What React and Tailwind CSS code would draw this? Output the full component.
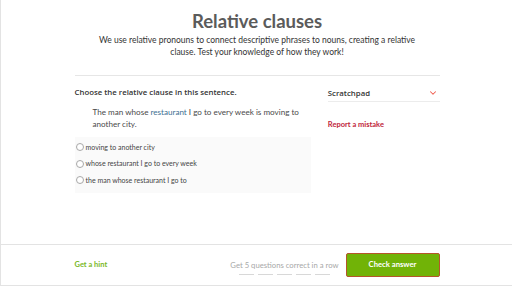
import { ChevronDown } from 'lucide-react'

const choices = [
  'moving to another city',
  'whose restaurant I go to every week',
  'the man whose restaurant I go to',
]

export default function App() {
  return (
    <div className="h-[288px] w-[512px] overflow-hidden bg-white font-['Lato',sans-serif] text-[#333]">
      <div className="flex h-[286px] flex-col border-b border-l border-[#e3e3e3]">
        <main className="flex-1">
          <div className="mx-auto w-[366px] pl-[1px]">
            <h1 className="mt-[9px] text-center text-[18.5px] font-bold leading-[24px] text-[#5b5b5b]">
              Relative clauses
            </h1>
            <p className="mt-[1px] text-center text-[8.5px] leading-[12px] text-[#333]">
              We use relative pronouns to connect descriptive phrases to nouns, creating a relative
              <br />
              clause. Test your knowledge of how they work!
            </p>
            <div className="mt-[17px] border-t border-[#e6e6e6]" />
            <div className="flex">
              <div className="w-[237px]">
                <p className="mt-[11px] font-['Open_Sans',sans-serif] text-[7.8px] font-semibold leading-[10px] text-[#333]">
                  Choose the relative clause in this sentence.
                </p>
                <p className="mt-[9px] pl-[18px] pr-[8px] text-[8.1px] leading-[12px] text-[#4a4a4a]">
                  The man whose <span className="text-[#3d6f92]">restaurant</span> I go to every week is moving to another city.
                </p>
                <div className="mt-[7px] bg-[#fafafa] pb-[4px] pt-[2px]">
                  {choices.map((c) => (
                    <div key={c} className="flex h-[16.5px] items-center gap-[2px] pl-[1px] text-[7px] leading-[9px] text-[#444]">
                      <span className="h-[8px] w-[8px] shrink-0 rounded-full border border-[#a8a8a8] bg-white" />
                      <span>{c}</span>
                    </div>
                  ))}
                </div>
              </div>
              <div className="ml-[17px] w-[112px]">
                <div className="mt-[12px] flex items-center justify-between border-b border-[#ececec] pb-[3px]">
                  <span className="font-['Open_Sans',sans-serif] text-[7.8px] font-semibold leading-[10px] text-[#333]">Scratchpad</span>
                  <ChevronDown className="mr-[2px] h-[10px] w-[10px] text-[#ef5a4c]" strokeWidth={2.5} color="#ef5a4c" />
                </div>
                <p className="mt-[17px] text-[7.5px] font-bold text-[#c0253b]">Report a mistake</p>
              </div>
            </div>
          </div>
        </main>
        <footer className="flex h-[41px] items-center border-t border-[#e3e3e3]">
          <div className="mx-auto flex w-[366px] items-center pl-[1px]">
            <span className="text-[7.5px] font-bold text-[#7ab828]">Get a hint</span>
            <div className="ml-auto flex flex-col items-center">
              <span className="mt-[5px] text-[7.7px] text-[#a8a8a8]">Get 5 questions correct in a row</span>
              <div className="mt-[3px] flex gap-[4px]">
                {[0, 1, 2, 3, 4].map((i) => (
                  <span key={i} className="h-[1px] w-[15px] bg-[#d8d8d8]" />
                ))}
              </div>
            </div>
            <button className="ml-[7px] h-[24px] w-[94px] rounded-[2px] border border-[#b5562a] bg-[#71b307] text-[7.7px] font-bold text-white">
              Check answer
            </button>
          </div>
        </footer>
      </div>
    </div>
  )
}
